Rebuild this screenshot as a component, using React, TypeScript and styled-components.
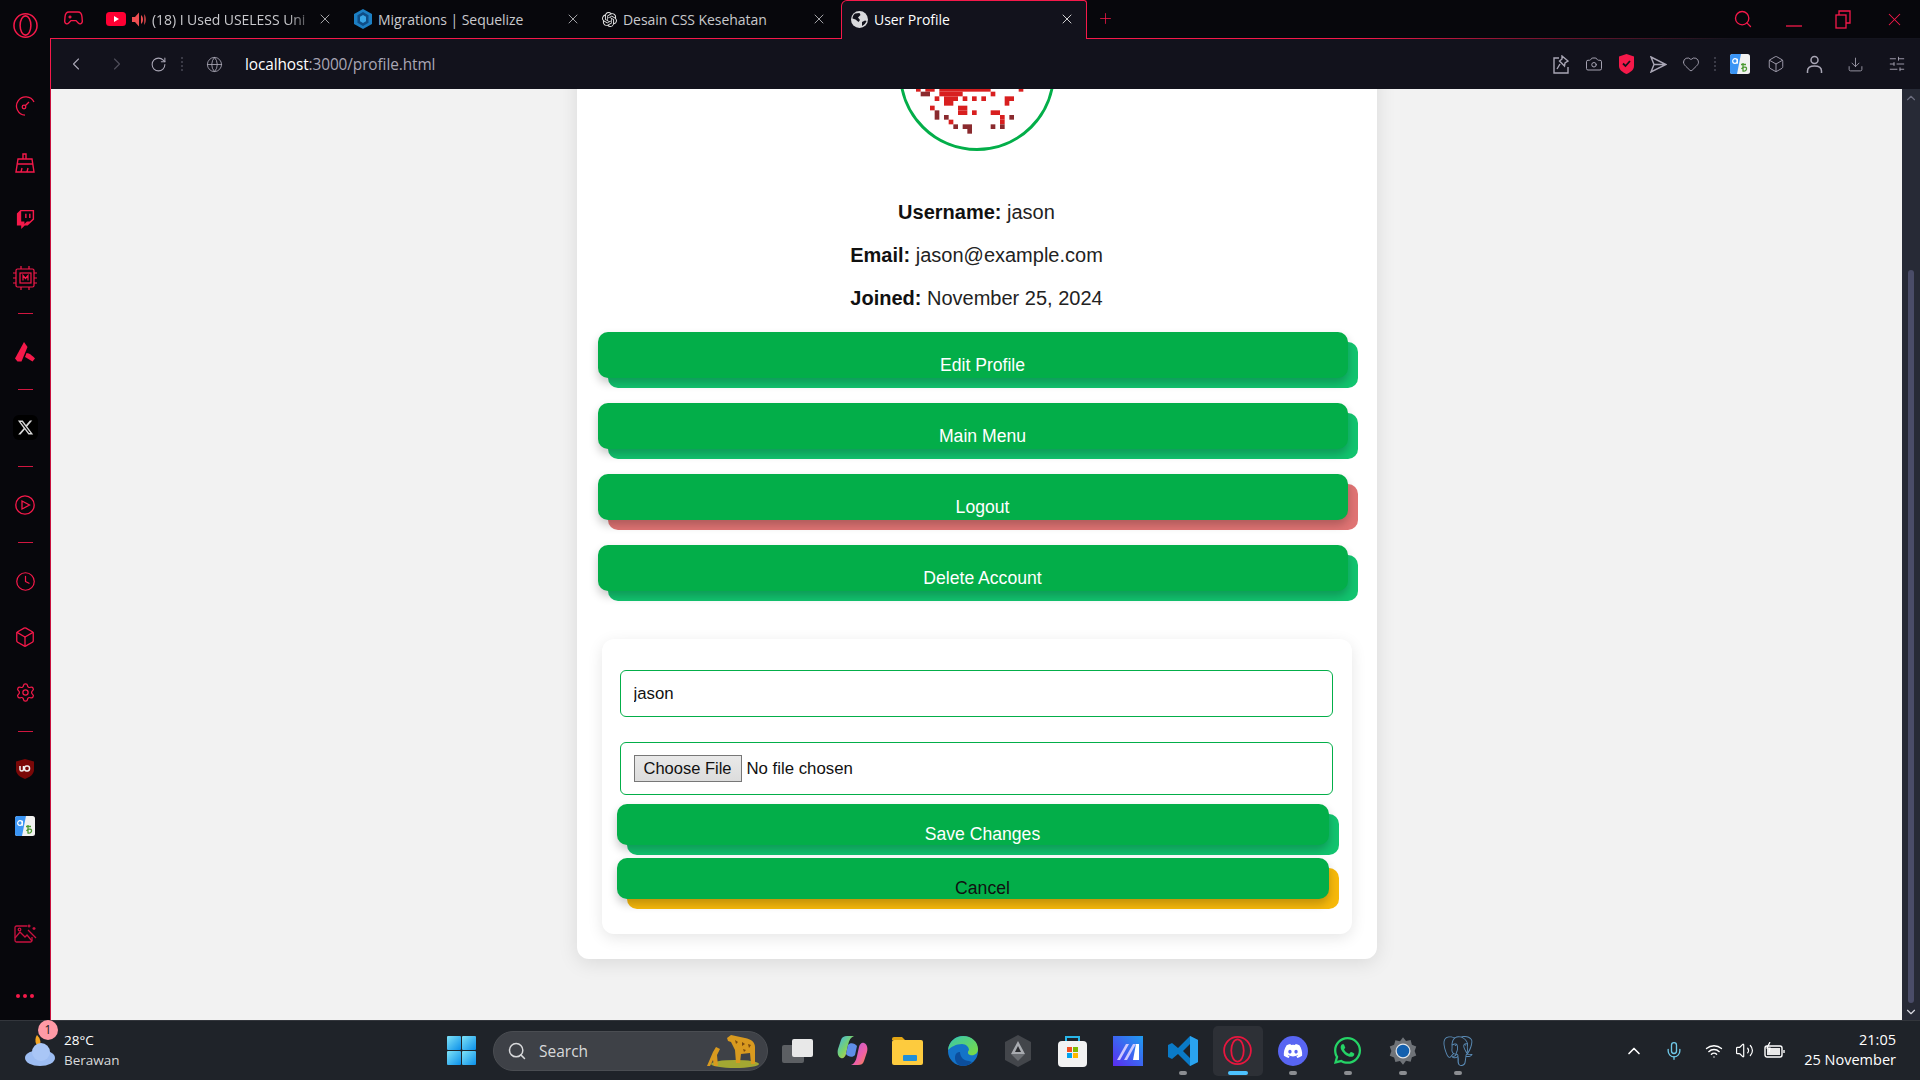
import React from 'react';
import styled, { createGlobalStyle } from 'styled-components';
import {
  Camera,
  ChevronLeft,
  ChevronRight,
  ChevronUp,
  ChevronDown,
  Clock,
  Box,
  Download,
  Globe,
  Heart,
  Mic,
  Plus,
  RotateCw,
  Search,
  Settings,
  SlidersHorizontal,
  Volume2,
  Wifi,
  X,
} from 'lucide-react';
import { FaDiscord, FaTwitch, FaWhatsapp, FaXTwitter } from 'react-icons/fa6';
import { SiOpenai, SiPostgresql } from 'react-icons/si';

const PINK = '#f5194a';

const GlobalStyle = createGlobalStyle`
  * { box-sizing: border-box; }
  html, body { margin: 0; height: 100%; overflow: hidden; background: #1f2329; }
  #root { height: 100%; }
`;

const Screen = styled.div`
  width: 1920px;
  height: 1080px;
  display: flex;
  flex-direction: column;
  font-family: 'Open Sans', 'Noto Sans', sans-serif;
  overflow: hidden;
`;

const Window = styled.div`
  height: 1020px;
  display: flex;
  background: #07070c;
`;

/* left rail */
const Rail = styled.aside`
  width: 50px;
  display: flex;
  flex-direction: column;
  align-items: center;
  color: ${PINK};
  background: #07070c;
`;

const Slot = styled.div<{ $h?: number }>`
  height: ${({ $h }) => $h ?? 57}px;
  flex: none;
  display: flex;
  align-items: center;
  justify-content: center;
`;

const RailRule = styled.div<{ $h: number }>`
  height: ${({ $h }) => $h}px;
  flex: none;
  display: flex;
  align-items: center;
  &::after {
    content: '';
    width: 15px;
    height: 1px;
    background: ${PINK};
    opacity: 0.85;
  }
`;

const RailSpacer = styled.div`
  flex: 1;
`;

const XTile = styled.div`
  width: 25px;
  height: 25px;
  border-radius: 6px;
  background: #000;
  color: #d8d8d8;
  display: flex;
  align-items: center;
  justify-content: center;
`;

/* browser column */
const Browser = styled.div`
  flex: 1;
  min-width: 0;
  display: flex;
  flex-direction: column;
`;

const TabBar = styled.div`
  position: relative;
  height: 39px;
  flex: none;
  display: flex;
  padding-left: 46px;
  background: #07070c;
  &::after {
    content: '';
    position: absolute;
    left: 0;
    right: 0;
    bottom: 0;
    height: 1px;
    background: linear-gradient(90deg, ${PINK} 0 70%, #8c1533 78%, #14141e 90%);
  }
`;

const GameButton = styled.div`
  position: absolute;
  left: 14px;
  top: 10px;
  color: ${PINK};
  display: flex;
`;

const Tab = styled.div<{ $active?: boolean; $w: number }>`
  position: relative;
  z-index: 1;
  width: ${({ $w }) => $w}px;
  flex: none;
  height: ${({ $active }) => ($active ? 39 : 38)}px;
  display: flex;
  align-items: center;
  gap: 6px;
  padding: 0 11px ${({ $active }) => ($active ? 2 : 0)}px ${({ $active }) => ($active ? 9 : 10)}px;
  font-size: 14px;
  letter-spacing: -0.05px;
  color: ${({ $active }) => ($active ? '#ffffff' : '#c9c9cd')};
  background: ${({ $active }) => ($active ? '#12121c' : 'transparent')};
  border: ${({ $active }) => ($active ? `1px solid ${PINK}` : 'none')};
  border-bottom: none;
  border-top-left-radius: ${({ $active }) => ($active ? 6 : 0)}px;
  border-top-right-radius: ${({ $active }) => ($active ? 3 : 0)}px;
  margin-left: ${({ $active }) => ($active ? 3 : 0)}px;
`;

const TabTitle = styled.span<{ $fade?: boolean }>`
  flex: 1;
  min-width: 0;
  white-space: nowrap;
  ${({ $fade }) =>
    $fade &&
    `-webkit-mask-image: linear-gradient(90deg, #000 85%, rgba(0,0,0,.25) 100%);
     mask-image: linear-gradient(90deg, #000 85%, rgba(0,0,0,.25) 100%);`}
`;

const NewTab = styled.div`
  margin-left: 10px;
  height: 36px;
  display: flex;
  align-items: center;
  color: ${PINK};
`;

const WindowControls = styled.div`
  position: absolute;
  right: 15px;
  top: 0;
  height: 38px;
  display: flex;
  align-items: center;
  gap: 33px;
  color: ${PINK};
`;

const Toolbar = styled.div`
  height: 50px;
  flex: none;
  display: flex;
  align-items: center;
  padding-left: 15px;
  background: #12121c;
  border-left: 1px solid ${PINK};
  color: #a9a6b5;
`;

const NavIcon = styled.div<{ $w: number; $dim?: boolean }>`
  width: ${({ $w }) => $w}px;
  flex: none;
  display: flex;
  align-items: center;
  opacity: ${({ $dim }) => ($dim ? 0.4 : 1)};
`;

const Address = styled.div`
  margin-left: 17px;
  font-size: 15.4px;
  letter-spacing: -0.1px;
  color: #a9a6b5;
  strong {
    font-weight: 400;
    color: #ffffff;
  }
`;

const ToolIcons = styled.div`
  margin-left: auto;
  display: flex;
  align-items: center;
  padding-right: 2px;
`;

const ToolIcon = styled.div<{ $w: number }>`
  width: ${({ $w }) => $w}px;
  display: flex;
  justify-content: center;
`;

const VDots = styled.div`
  width: 2px;
  height: 14px;
  background-image: linear-gradient(#3a3a46 50%, transparent 50%);
  background-size: 2px 4px;
`;

/* page */
const Viewport = styled.div`
  flex: 1;
  min-height: 0;
  display: flex;
  border-left: 1px solid #c8123f;
`;

const Page = styled.main`
  flex: 1;
  min-width: 0;
  overflow: hidden;
  background: #f2f2f2;
  display: flex;
  justify-content: center;
  font-family: 'Liberation Sans', Arial, sans-serif;
`;

const Card = styled.section`
  width: 800px;
  height: 984px;
  margin-top: -114px;
  padding: 20px 25px 25px;
  background: #ffffff;
  border-radius: 12px;
  box-shadow: 0 4px 20px rgba(0, 0, 0, 0.1);
  flex: none;
`;

const Avatar = styled.div`
  width: 156px;
  height: 156px;
  margin: 0 auto 50px;
  border: 3px solid #03ae49;
  border-radius: 50%;
  overflow: hidden;
`;

const Info = styled.p`
  margin: 0 0 20px;
  text-align: center;
  font-size: 20px;
  line-height: 23px;
  color: #222222;
  strong {
    color: #111111;
  }
`;

const Actions = styled.div`
  margin-top: 32px;
  display: flex;
  flex-direction: column;
  gap: 25px;
`;

const Raised = styled.button<{ $base: string; $ink?: string; $h: number; $w?: number; $left: number }>`
  position: relative;
  display: block;
  width: ${({ $w }) => ($w ? `${$w}px` : '100%')};
  height: ${({ $h }) => $h}px;
  margin-left: ${({ $left }) => $left}px;
  padding: 0;
  border: none;
  border-radius: 10px;
  font-family: inherit;
  font-size: 17.6px;
  color: ${({ $ink }) => $ink ?? '#ffffff'};
  background: ${({ $base }) => $base};
  isolation: isolate;
  &::before {
    content: '';
    position: absolute;
    z-index: -1;
    left: -10px;
    top: -10px;
    width: 100%;
    height: 100%;
    border-radius: 10px;
    background: #03ae49;
    box-shadow: 0 5px 10px rgba(0, 0, 0, 0.22);
  }
`;

const EditForm = styled.form`
  margin-top: 38px;
  height: 295px;
  padding: 31px 0 0 18px;
  border-radius: 12px;
  background: #ffffff;
  box-shadow: 0 4px 15px rgba(0, 0, 0, 0.1);
`;

const TextField = styled.input`
  display: block;
  width: 713px;
  height: 47px;
  padding: 0 13px;
  margin-bottom: 25px;
  border: 1.5px solid #03ae49;
  border-radius: 6px;
  outline: none;
  font-family: inherit;
  font-size: 16.8px;
  color: #111111;
  background: #ffffff;
`;

const FileField = styled(TextField)`
  height: 53px;
  margin-bottom: 19px;
  padding: 12px 13px;
  &::file-selector-button {
    width: 108px;
    height: 27px;
    margin-right: 5px;
    padding: 0;
    font-family: inherit;
    font-size: 16.5px;
    color: #111111;
    background: linear-gradient(#e9e9e9, #dcdcdc);
    border: 1px solid #777777;
    border-radius: 0;
  }
`;

const FormButtons = styled.div`
  display: flex;
  flex-direction: column;
  gap: 13px;
`;

const ScrollTrack = styled.div`
  position: relative;
  width: 18px;
  flex: none;
  background: #272a36;
  color: #6b6c7e;
  display: flex;
  flex-direction: column;
  align-items: center;
  justify-content: space-between;
  padding: 2px 0 1px;
`;

const ScrollThumb = styled.div`
  position: absolute;
  top: 181px;
  left: 6px;
  width: 6px;
  height: 733px;
  border-radius: 3px;
  background: #4a4c68;
`;

/* taskbar */
const Taskbar = styled.footer`
  position: relative;
  height: 60px;
  flex: none;
  display: flex;
  align-items: center;
  background: #1f2329;
  border-top: 1px solid #33363c;
  color: #ffffff;
  font-family: 'Open Sans', 'Noto Sans', sans-serif;
`;

const Weather = styled.div`
  position: relative;
  width: 447px;
  flex: none;
  display: flex;
  align-items: center;
  gap: 8px;
  padding-left: 24px;
`;

const Badge = styled.span`
  position: absolute;
  left: 38px;
  top: -10px;
  width: 20px;
  height: 20px;
  border-radius: 50%;
  background: #ff9aa6;
  color: #1c1c1c;
  font-size: 12px;
  display: flex;
  align-items: center;
  justify-content: center;
`;

const WeatherText = styled.div`
  font-size: 13.5px;
  line-height: 20px;
  margin-bottom: 2px;
  span {
    display: block;
    color: #d8d9db;
  }
`;

const SearchPill = styled.div`
  width: 275px;
  height: 40px;
  margin-left: 17px;
  padding: 0 8px 0 13px;
  flex: none;
  display: flex;
  align-items: center;
  gap: 12px;
  border-radius: 20px;
  background: #3e4147;
  border: 1px solid #4a4d52;
  color: #d8d9db;
  font-size: 15.5px;
  svg:last-child {
    margin-left: auto;
  }
`;

const Apps = styled.div`
  margin-left: 2px;
  display: flex;
`;

const AppSlot = styled.div<{ $active?: boolean; $dot?: boolean }>`
  position: relative;
  width: 55px;
  height: 50px;
  display: flex;
  align-items: center;
  justify-content: center;
  border-radius: 5px;
  background: ${({ $active }) => ($active ? '#2d3036' : 'transparent')};
  ${({ $active }) => $active && 'width: 50px; margin: 0 2.5px;'}
  &::after {
    content: ${({ $active, $dot }) => ($active || $dot ? "''" : 'none')};
    position: absolute;
    left: 50%;
    bottom: 1px;
    transform: translateX(-50%);
    width: ${({ $active }) => ($active ? 20 : 8)}px;
    height: 4px;
    border-radius: 2px;
    background: ${({ $active }) => ($active ? '#4cc2ff' : '#8b8d91')};
  }
`;

const DiscordBadge = styled.div`
  width: 30px;
  height: 30px;
  border-radius: 50%;
  background: #5865f2;
  color: #ffffff;
  display: flex;
  align-items: center;
  justify-content: center;
`;

const Tray = styled.div`
  position: absolute;
  right: 24px;
  top: 0;
  bottom: 0;
  display: flex;
  align-items: center;
`;

const TrayIcon = styled.div<{ $w: number; $color?: string }>`
  width: ${({ $w }) => $w}px;
  display: flex;
  justify-content: center;
  color: ${({ $color }) => $color ?? '#ffffff'};
`;

const DateTime = styled.div`
  margin-left: 10px;
  margin-bottom: 2px;
  text-align: right;
  font-size: 14.5px;
  line-height: 20px;
`;

/* drawn icons */
const OperaLogo = ({ size = 25, color = PINK }: { size?: number; color?: string }) => (
  <svg width={size} height={size} viewBox="0 0 26 26" fill="none" stroke={color} strokeWidth="1.6">
    <ellipse cx="13" cy="13" rx="12" ry="12.2" />
    <ellipse cx="13" cy="13" rx="5.6" ry="10" />
  </svg>
);

const Gamepad = () => (
  <svg width="19" height="17" viewBox="0 0 19 17" fill="none" stroke="currentColor" strokeWidth="1.4">
    <path d="M5 2h9c2.4 0 3.8 2 4 5l.3 4c.2 2.6-2.4 3.7-4 2l-2.3-2.4H7L4.700 13c-1.600 1.700-4.200.6-4-2L1 7c.2-3 1.600-5 4-5z" />
    <path d="M4.500 7h3M6 5.500v3M12.500 7h.01M14.500 7h.01" />
  </svg>
);

const YouTube = () => (
  <svg width="20" height="14" viewBox="0 0 20 14">
    <rect width="20" height="14" rx="3.500" fill="#ff0033" />
    <path d="M8 4l5 3-5 3z" fill="#fff" />
  </svg>
);

const SpeakerRed = () => (
  <svg width="14" height="15" viewBox="0 0 14 15" fill="#ef4f52">
    <path d="M0 5h3l4-4.500v14L3 10H0z" />
    <path d="M9 3c1.500 1 2 2.800 2 4.500S10.500 11 9 12z" />
    <path d="M12 2c1.300 1.500 2 3.500 2 5.500s-.7 4-2 5.500z" opacity=".7" />
  </svg>
);

const SequelizeMark = () => (
  <svg width="18" height="20" viewBox="0 0 18 20">
    <path d="M9 0l9 5v10l-9 5-9-5V5z" fill="#1c7fc4" />
    <path d="M9 3l5.500 3.200v7.600L9 17l-5.500-3.200V6.200z" fill="#0f4d86" />
    <path d="M9 6l3 1.700v4.600L9 14l-3-1.700V7.700z" fill="#39a7e8" />
  </svg>
);

const GlobeSolid = () => (
  <svg width="17" height="17" viewBox="0 0 17 17">
    <circle cx="8.500" cy="8.500" r="8.500" fill="#d9d9dc" />
    <path
      d="M4 2.500l4.500-.5 1 2-2.500 2.500 2 2.500-1.500 2-3-2.500-3-1c0-2 1-3.800 2.500-5zM11 11l3-1.500 1.500.5c-.7 2.200-2.300 4-4.500 5z"
      fill="#12121c"
    />
  </svg>
);

const Restore = () => (
  <svg width="16" height="19" viewBox="0 0 16 19" fill="none" stroke="currentColor" strokeWidth="1.300">
    <rect x="1" y="5" width="10" height="13" />
    <path d="M4 5V1h11v12h-4" />
  </svg>
);

const PinNote = () => (
  <svg width="16" height="19" viewBox="0 0 16 19" fill="none" stroke="currentColor" strokeWidth="1.400">
    <path d="M6 3H1v15h14v-6" />
    <path d="M9 1l6 5-3 2-.5 3-5-5 2.500-2zM7 9l-3 5" />
  </svg>
);

const ShieldRed = () => (
  <svg width="15" height="20" viewBox="0 0 15 20">
    <path d="M7.500 0L15 2.500V12c0 4-4 6.500-7.500 8C4 18.500 0 16 0 12V2.500z" fill="#f5194a" />
    <path d="M4 9.500l2.500 2.500 4.500-5" fill="none" stroke="#12121c" strokeWidth="1.800" />
  </svg>
);

const SendOutline = () => (
  <svg width="17" height="17" viewBox="0 0 17 17" fill="none" stroke="currentColor" strokeWidth="1.400">
    <path d="M1 1l15 7.500L1 16l3-7.500zM4 8.500h12" />
  </svg>
);

const Translate = ({ size = 20 }: { size?: number }) => (
  <svg width={size} height={size} viewBox="0 0 20 20">
    <rect width="20" height="20" rx="2.500" fill="#f1f1f1" />
    <path d="M2.500 0H11L7 20H2.500A2.500 2.500 0 0 1 0 17.500v-15A2.500 2.500 0 0 1 2.500 0z" fill="#3b95f5" />
    <circle cx="5" cy="7" r="2.300" fill="none" stroke="#fff" strokeWidth="1.200" />
    <path d="M7.300 4.700v5" stroke="#fff" strokeWidth="1.100" />
    <path d="M11 10.500h5M13 9v8c2 .5 4-1 3.500-3-.5-1.500-4-1-5 1" fill="none" stroke="#4c9a32" strokeWidth="1.300" />
  </svg>
);

const UserBust = () => (
  <svg width="17" height="18" viewBox="0 0 17 18" fill="none" stroke="currentColor" strokeWidth="1.500">
    <circle cx="8.500" cy="5" r="3.500" />
    <path d="M1.500 18v-2c0-3 2.500-5 7-5s7 2 7 5v2" />
  </svg>
);

const Speed = () => (
  <svg width="20" height="20" viewBox="0 0 20 20" fill="none" stroke="currentColor" strokeWidth="1.300">
    <path d="M19 6A9.200 9.200 0 1 0 10 19.200" />
    <circle cx="9" cy="11" r="1.800" />
    <path d="M10.500 9.500l3.500-3.500M19 9h.01M19 11.500h.01M18 14h.01" />
  </svg>
);

const Broom = () => (
  <svg width="20" height="20" viewBox="0 0 20 20" fill="none" stroke="currentColor" strokeWidth="1.400">
    <path d="M8 6V1h3v5M3 6h14l2 13H1z" />
    <path d="M2.500 11H18M6 19l1-4M12 19l1-4" />
  </svg>
);

const Chip = () => (
  <svg width="24" height="24" viewBox="0 0 24 24" fill="none" stroke="currentColor" strokeWidth="1.200">
    <rect x="3" y="3" width="18" height="18" rx="1.500" />
    <rect x="7" y="7" width="11" height="10" />
    <path d="M0 7h3M0 12h3M0 17h3M21 7h3M21 12h3M21 17h3M8 0v3M16 0v3M8 21v3M16 21v3" />
    <path d="M10 14.500v-5l2.500 3 2.500-3v5" />
  </svg>
);

const Aria = () => (
  <svg width="20" height="20" viewBox="0 0 20 20" fill={PINK}>
    <path d="M9 0l3.500 5-6 14.500H2.500L0 16.500z" />
    <path d="M11.500 11c3 0 6 3 8.500 5.500L17.500 19.500 10 15z" />
  </svg>
);

const PlayCircle = () => (
  <svg width="20" height="20" viewBox="0 0 20 20" fill="none" stroke="currentColor" strokeWidth="1.300">
    <circle cx="10" cy="10" r="9.200" />
    <path d="M7 6l7.500 4L7 14z" />
  </svg>
);

const UBlock = () => (
  <svg width="18" height="20" viewBox="0 0 18 20">
    <path d="M9 0l9 2.500V11c0 4.500-5 7.500-9 9-4-1.500-9-4.500-9-9V2.500z" fill="#7a0808" />
    <path
      d="M4 7v3.500c0 2 3.500 2 3.500 0V7"
      fill="none"
      stroke="#f4f4f4"
      strokeWidth="1.500"
    />
    <rect x="8.500" y="7" width="5" height="5" rx="2.200" fill="none" stroke="#f4f4f4" strokeWidth="1.500" />
  </svg>
);

const Gallery = () => (
  <svg width="23" height="20" viewBox="0 0 23 20" fill="none" stroke="#c8123f" strokeWidth="1.300">
    <path d="M13 3H2.500A1.500 1.500 0 0 0 1 4.500v13A1.500 1.500 0 0 0 2.500 19h14a1.500 1.500 0 0 0 1.500-1.500V14" />
    <path d="M1 15l5-6 5 5 2-2 5 6" />
    <circle cx="5.500" cy="6.500" r="1.300" />
    <path d="M14 7l8 8M15 1.500v3M13.500 3h3M20 4v3M18.500 5.500h3" />
  </svg>
);

const MoreDots = () => (
  <svg width="18" height="4" viewBox="0 0 18 4" fill={PINK}>
    <circle cx="2" cy="2" r="2" />
    <circle cx="9" cy="2" r="2" />
    <circle cx="16" cy="2" r="2" />
  </svg>
);

const WeatherIcon = () => (
  <svg width="32" height="32" viewBox="0 0 32 32">
    <path d="M13 0a9 9 0 0 0 6 14 9 9 0 0 1-15 5A11 11 0 0 0 13 0z" fill="#f5a623" />
    <ellipse cx="16" cy="23" rx="15" ry="8" fill="#9dbdf2" />
    <circle cx="17" cy="17" r="9" fill="#a9c6f6" />
  </svg>
);

const WinLogo = () => (
  <svg width="29" height="29" viewBox="0 0 29 29">
    <defs>
      <linearGradient id="win" x1="0" y1="0" x2="1" y2="1">
        <stop offset="0" stopColor="#7fe3f7" />
        <stop offset="1" stopColor="#0a8fea" />
      </linearGradient>
    </defs>
    <rect width="14" height="14" rx="1" fill="url(#win)" />
    <rect x="15" width="14" height="14" rx="1" fill="url(#win)" />
    <rect y="15" width="14" height="14" rx="1" fill="url(#win)" />
    <rect x="15" y="15" width="14" height="14" rx="1" fill="url(#win)" />
  </svg>
);

const Giraffe = () => (
  <svg width="54" height="34" viewBox="0 0 54 34">
    <ellipse cx="30" cy="30" rx="24" ry="4" fill="#a3a832" />
    <path d="M22 4l4-3 14 3c6 1 10 4 10 9v17h-4l-1-11-9 1-1 9h-4l-1-13-4-8-3-1z" fill="#d99a1f" />
    <path d="M2 32l6-14 3-5 4 2-3 6 1 11H9l-1-6-3 6z" fill="#d99a1f" />
    <path d="M30 6l3 2-2 2zM37 8l3 2-3 2zM43 10l3 1-2 3zM38 15l3 1-2 2z" fill="#7a4a10" />
  </svg>
);

const TaskView = () => (
  <svg width="32" height="28" viewBox="0 0 32 28">
    <rect x="0" y="8" width="22" height="18" rx="2" fill="#5c5f63" />
    <rect x="10" y="2" width="21" height="18" rx="2" fill="#e8e8e8" />
  </svg>
);

const Copilot = () => (
  <svg width="31" height="31" viewBox="0 0 31 31">
    <defs>
      <linearGradient id="cp1" x1="0" y1="0" x2="1" y2="1">
        <stop offset="0" stopColor="#3db2ee" />
        <stop offset="0.5" stopColor="#7bd36a" />
        <stop offset="1" stopColor="#f5c33b" />
      </linearGradient>
      <linearGradient id="cp2" x1="0" y1="0" x2="1" y2="1">
        <stop offset="0" stopColor="#b05ce0" />
        <stop offset="0.6" stopColor="#ef5fa7" />
        <stop offset="1" stopColor="#f38a3c" />
      </linearGradient>
    </defs>
    <path d="M10 1h7c-3 1-5 4-6 9l-2 9c-.7 3-3 5-5 4-3-1-4-5-3-9l3-9c1-3 3-4 6-4z" fill="url(#cp1)" />
    <path d="M21 30h-7c3-1 5-4 6-9l2-9c.7-3 3-5 5-4 3 1 4 5 3 9l-3 9c-1 3-3 4-6 4z" fill="url(#cp2)" />
    <path d="M11 10c2-3 7-2 9 1l-2 9c-2 3-7 2-9-1z" fill="#5f8ee8" />
  </svg>
);

const Explorer = () => (
  <svg width="31" height="29" viewBox="0 0 31 29">
    <path d="M0 3a2 2 0 0 1 2-2h8l3 3h-13z" fill="#e2a514" />
    <rect y="4" width="31" height="25" rx="2" fill="#fdcb3e" />
    <rect x="11" y="19" width="14" height="6" rx="1" fill="#1f8fd8" />
  </svg>
);

const Edge = () => (
  <svg width="30" height="30" viewBox="0 0 30 30">
    <defs>
      <linearGradient id="edge" x1="0" y1="0" x2="1" y2="1">
        <stop offset="0" stopColor="#36c6b0" />
        <stop offset="1" stopColor="#7ddc3f" />
      </linearGradient>
    </defs>
    <circle cx="15" cy="15" r="15" fill="#1473c8" />
    <path d="M0 14C1 5 8 0 15 0c9 0 15 6 15 13 0 5-4 7-8 6-3-1-2-4-1-5 0-3-3-6-7-6-6 0-11 3-14 6z" fill="url(#edge)" />
    <path d="M12 16c0 5 4 9 9 9l3 1c-3 3-6 4-9 4-5 0-8-4-8-8s2-6 5-6z" fill="#0c4e9c" />
  </svg>
);

const HexApp = () => (
  <svg width="26" height="32" viewBox="0 0 26 32">
    <path d="M13 0l13 7v18l-13 7-13-7V7z" fill="#43464b" />
    <path d="M13 6l7 13H6z" fill="#a8abb0" />
    <path d="M13 11l3 6h-6z" fill="#2b2d31" />
    <path d="M6 19l7 7 7-7z" fill="#6a6d72" />
  </svg>
);

const Store = () => (
  <svg width="29" height="32" viewBox="0 0 29 32">
    <path d="M8 7V2h13v5" fill="none" stroke="#29b6e8" strokeWidth="2" />
    <rect y="6" width="29" height="26" rx="4" fill="#f2f2f2" />
    <rect x="9" y="12" width="5" height="5" fill="#f25022" />
    <rect x="15" y="12" width="5" height="5" fill="#7fba00" />
    <rect x="9" y="18" width="5" height="5" fill="#00a4ef" />
    <rect x="15" y="18" width="5" height="5" fill="#ffb900" />
  </svg>
);

const MApp = () => (
  <svg width="30" height="30" viewBox="0 0 30 30">
    <defs>
      <linearGradient id="mapp" x1="0" y1="1" x2="1" y2="0">
        <stop offset="0" stopColor="#5a2bf0" />
        <stop offset="1" stopColor="#1f9df0" />
      </linearGradient>
    </defs>
    <rect width="30" height="30" fill="url(#mapp)" />
    <path d="M4 24L13 8h3L7 24zM11 24l9-16h3L14 24z" fill="#cfc8ff" />
    <path d="M20 24l3-16h3v16z" fill="#fff" />
  </svg>
);

const VSCode = () => (
  <svg width="30" height="30" viewBox="0 0 30 30">
    <path d="M22 0l8 4v22l-8 4-12-12-6 5-4-2v-12l4-2 6 5zM22 8l-7 7 7 7z" fill="#0a7ac7" />
    <path d="M22 0l8 4v22l-8 4z" fill="#2aa3ee" />
  </svg>
);

const Gear = () => (
  <svg width="30" height="30" viewBox="0 0 24 24">
    <path
      d="M12 1l2.400 3 3.700-.8 1 3.700 3.500 1.400-1.300 3.600 1.300 3.600-3.500 1.400-1 3.700-3.700-.8L12 23l-2.400-3-3.700.8-1-3.700-3.500-1.400L2.700 12 1.400 8.400l3.500-1.400 1-3.700 3.700.8z"
      fill="#6f7378"
    />
    <circle cx="12" cy="12" r="5.500" fill="#1360ae" />
    <circle cx="12" cy="12" r="5.500" fill="none" stroke="#dfe3e8" strokeWidth="1" />
  </svg>
);

const Battery = () => (
  <svg width="21" height="17" viewBox="0 0 21 17" fill="none" stroke="#fff" strokeWidth="1.400">
    <rect x="1" y="4" width="17" height="11" rx="2" />
    <rect x="3" y="6" width="13" height="7" fill="#e8e8e8" stroke="none" />
    <path d="M20 8v3" />
    <path d="M6 0L3 6h3l-1 4" strokeWidth="1.200" />
  </svg>
);

/* rows of the QR avatar: [col, row, span, dark] */
const QR_CELLS: [number, number, number, number?][] = [
  [0, 0, 1], [2, 0, 2], [5, 0, 11], [22, 0, 1],
  [1, 1, 2, 1], [5, 1, 5], [16, 1, 1],
  [4, 2, 1], [6, 2, 3], [10, 2, 1], [12, 2, 1], [14, 2, 1], [19, 2, 2],
  [6, 3, 2], [19, 3, 1],
  [3, 4, 1], [9, 4, 2],
  [4, 5, 1, 1], [9, 5, 2], [12, 5, 1], [16, 5, 2],
  [4, 6, 1, 1], [6, 6, 1, 1], [18, 6, 1], [20, 6, 1, 1],
  [7, 7, 1], [18, 7, 1],
  [8, 8, 1, 1], [10, 8, 2, 1], [16, 8, 1, 1], [18, 8, 1, 1],
  [11, 9, 1, 1],
];

const QrCode = () => (
  <svg width="150" height="150" viewBox="0 0 150 150">
    {QR_CELLS.map(([c, r, span, dark]) => (
      <rect
        key={`${c}-${r}`}
        x={14 + c * 4.667}
        y={89 + r * 4.667}
        width={span * 4.667}
        height={4.667}
        fill={dark ? '#8a2a2e' : '#d81f1f'}
      />
    ))}
  </svg>
);

const ProfileButtons = [
  { label: 'Edit Profile', base: '#12c46f' },
  { label: 'Main Menu', base: '#12c46f' },
  { label: 'Logout', base: '#e07474' },
  { label: 'Delete Account', base: '#12c46f' },
];

function App(): JSX.Element {
  return (
    <Screen>
      <GlobalStyle />
      <Window>
        <Rail>
          <Slot $h={50}>
            <OperaLogo />
          </Slot>
          <Slot $h={27.5} />
          <Slot><Speed /></Slot>
          <Slot><Broom /></Slot>
          <Slot $h={56}><FaTwitch size={19} /></Slot>
          <Slot $h={61}><Chip /></Slot>
          <RailRule $h={10} />
          <Slot $h={67}><Aria /></Slot>
          <RailRule $h={7} />
          <Slot $h={69}>
            <XTile><FaXTwitter size={17} /></XTile>
          </Slot>
          <RailRule $h={9} />
          <Slot $h={69}><PlayCircle /></Slot>
          <RailRule $h={5} />
          <Slot $h={73}><Clock size={21} strokeWidth={1.4} /></Slot>
          <Slot $h={39}><Box size={22} strokeWidth={1.4} /></Slot>
          <Slot $h={71}><Settings size={21} strokeWidth={1.4} /></Slot>
          <RailRule $h={7} />
          <Slot $h={69}><UBlock /></Slot>
          <Slot $h={45}><Translate /></Slot>
          <RailSpacer />
          <Slot $h={78}><Gallery /></Slot>
          <Slot $h={48}><MoreDots /></Slot>
        </Rail>
        <Browser>
          <TabBar>
            <GameButton><Gamepad /></GameButton>
            <Tab $w={248}>
              <YouTube />
              <SpeakerRed />
              <TabTitle $fade>(18) I Used USELESS Uni</TabTitle>
              <X size={16} strokeWidth={1.2} />
            </Tab>
            <Tab $w={248}>
              <SequelizeMark />
              <TabTitle>Migrations | Sequelize</TabTitle>
              <X size={16} strokeWidth={1.2} />
            </Tab>
            <Tab $w={246}>
              <SiOpenai size={15} color="#e4e4e4" />
              <TabTitle>Desain CSS Kesehatan</TabTitle>
              <X size={16} strokeWidth={1.2} />
            </Tab>
            <Tab $active $w={246}>
              <GlobeSolid />
              <TabTitle>User Profile</TabTitle>
              <X size={16} strokeWidth={1.2} />
            </Tab>
            <NewTab><Plus size={17} strokeWidth={1.1} /></NewTab>
            <WindowControls>
              <Search size={20} strokeWidth={1.6} />
              <svg width="16" height="16" viewBox="0 0 16 16" stroke="currentColor" strokeWidth="1.300">
                <path d="M0 15h16" />
              </svg>
              <Restore />
              <X size={21} strokeWidth={1.2} />
            </WindowControls>
          </TabBar>
          <Toolbar>
            <NavIcon $w={41}><ChevronLeft size={20} strokeWidth={1.3} /></NavIcon>
            <NavIcon $w={43} $dim><ChevronRight size={20} strokeWidth={1.3} /></NavIcon>
            <NavIcon $w={31}><RotateCw size={17} strokeWidth={1.5} /></NavIcon>
            <NavIcon $w={25}><VDots /></NavIcon>
            <NavIcon $w={22}><Globe size={17} strokeWidth={1.2} /></NavIcon>
            <Address>
              <strong>localhost</strong>:3000/profile.html
            </Address>
            <ToolIcons>
              <ToolIcon $w={33}><PinNote /></ToolIcon>
              <ToolIcon $w={33}><Camera size={18} strokeWidth={1.3} /></ToolIcon>
              <ToolIcon $w={32}><ShieldRed /></ToolIcon>
              <ToolIcon $w={33}><SendOutline /></ToolIcon>
              <ToolIcon $w={32}><Heart size={18} strokeWidth={1.2} /></ToolIcon>
              <ToolIcon $w={15}><VDots /></ToolIcon>
              <ToolIcon $w={35}><Translate /></ToolIcon>
              <ToolIcon $w={37}><Box size={18} strokeWidth={1.2} /></ToolIcon>
              <ToolIcon $w={41}><UserBust /></ToolIcon>
              <ToolIcon $w={41}><Download size={17} strokeWidth={1.2} /></ToolIcon>
              <ToolIcon $w={42}><SlidersHorizontal size={18} strokeWidth={1.2} /></ToolIcon>
            </ToolIcons>
          </Toolbar>
          <Viewport>
            <Page>
              <Card>
                <Avatar><QrCode /></Avatar>
                <Info><strong>Username:</strong> jason</Info>
                <Info><strong>Email:</strong> jason@example.com</Info>
                <Info><strong>Joined:</strong> November 25, 2024</Info>
                <Actions>
                  {ProfileButtons.map((b) => (
                    <Raised key={b.label} type="button" $base={b.base} $h={46} $left={6}>
                      {b.label}
                    </Raised>
                  ))}
                </Actions>
                <EditForm onSubmit={(e) => e.preventDefault()}>
                  <TextField type="text" defaultValue="jason" />
                  <FileField type="file" />
                  <FormButtons>
                    <Raised type="submit" $base="#12c46f" $h={41} $w={712} $left={7}>
                      Save Changes
                    </Raised>
                    <Raised type="button" $base="#f7b90b" $ink="#111111" $h={41} $w={712} $left={7}>
                      Cancel
                    </Raised>
                  </FormButtons>
                </EditForm>
              </Card>
            </Page>
            <ScrollTrack>
              <ChevronUp size={14} />
              <ScrollThumb />
              <ChevronDown size={14} color="#d8d8e0" />
            </ScrollTrack>
          </Viewport>
        </Browser>
      </Window>
      <Taskbar>
        <Weather>
          <WeatherIcon />
          <Badge>1</Badge>
          <WeatherText>
            28°C
            <span>Berawan</span>
          </WeatherText>
        </Weather>
        <WinLogo />
        <SearchPill>
          <Search size={20} strokeWidth={1.8} />
          Search
          <Giraffe />
        </SearchPill>
        <Apps>
          <AppSlot><TaskView /></AppSlot>
          <AppSlot><Copilot /></AppSlot>
          <AppSlot><Explorer /></AppSlot>
          <AppSlot><Edge /></AppSlot>
          <AppSlot><HexApp /></AppSlot>
          <AppSlot><Store /></AppSlot>
          <AppSlot><MApp /></AppSlot>
          <AppSlot $dot><VSCode /></AppSlot>
          <AppSlot $active><OperaLogo size={29} color="#e8163f" /></AppSlot>
          <AppSlot $dot><DiscordBadge><FaDiscord size={20} /></DiscordBadge></AppSlot>
          <AppSlot $dot><FaWhatsapp size={31} color="#25d366" /></AppSlot>
          <AppSlot $dot><Gear /></AppSlot>
          <AppSlot $dot><SiPostgresql size={30} color="#5b8db8" /></AppSlot>
        </Apps>
        <Tray>
          <TrayIcon $w={40}><ChevronUp size={20} strokeWidth={2} /></TrayIcon>
          <TrayIcon $w={40} $color="#6fc8e8"><Mic size={20} strokeWidth={1.6} /></TrayIcon>
          <TrayIcon $w={40}><Wifi size={18} strokeWidth={1.8} /></TrayIcon>
          <TrayIcon $w={20}><Volume2 size={19} strokeWidth={1.5} /></TrayIcon>
          <TrayIcon $w={40}><Battery /></TrayIcon>
          <DateTime>
            21:05
            <br />
            25 November
          </DateTime>
        </Tray>
      </Taskbar>
    </Screen>
  );
}

export default App;
